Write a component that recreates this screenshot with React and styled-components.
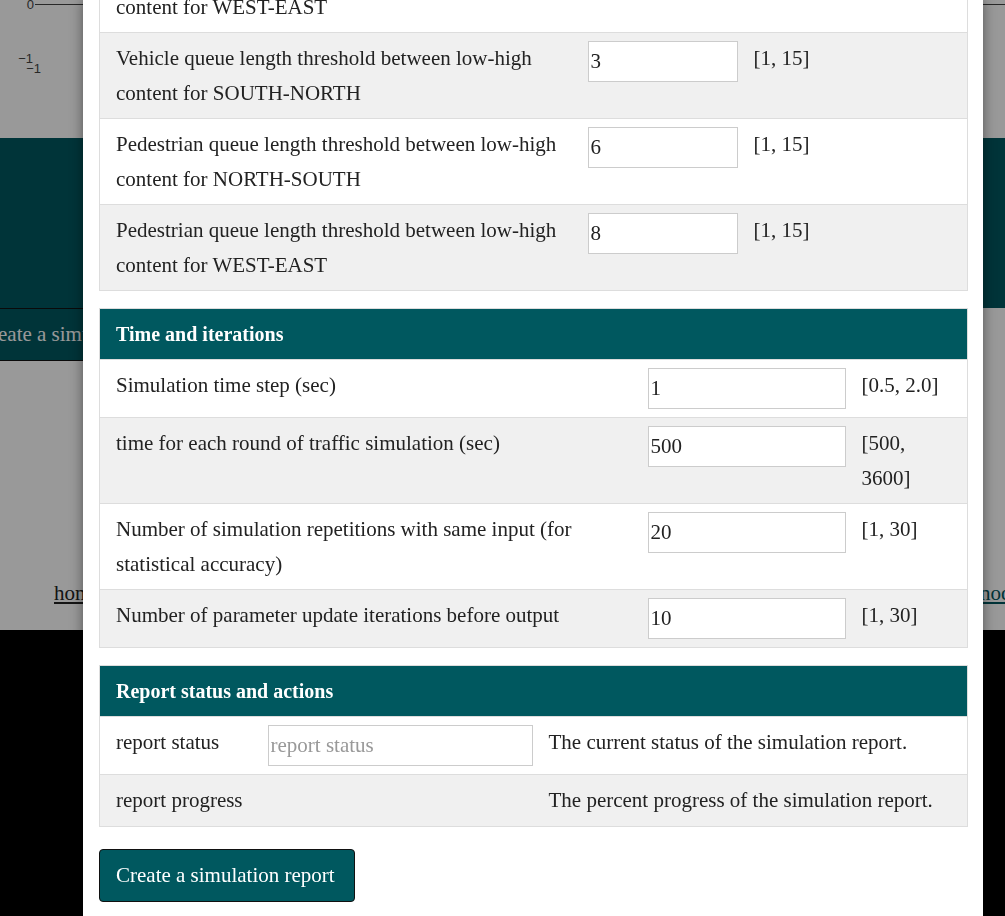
import styled, { createGlobalStyle } from "styled-components";

const GlobalStyle = createGlobalStyle`
  html, body {
    margin: 0;
    padding: 0;
    background: #000;
  }
  body {
    font-family: "Liberation Serif", "Times New Roman", serif;
    color: #222;
    overflow: hidden;
  }
`;

const TEAL = "#00585f";

/* ---------- page under the dialog ---------- */

const Page = styled.div`
  width: 100%;
  display: flex;
  flex-direction: column;
`;

const ChartArea = styled.section`
  height: 138px;
  background: #fff;
`;

const Hero = styled.section`
  height: 170px;
  background: ${TEAL};
`;

const ActionBar = styled.div`
  height: 53px;
  background: #fff;
  display: flex;
`;

const PageButton = styled.button`
  margin-left: -40px;
  width: 300px;
  height: 53px;
  padding: 8px 16px;
  text-align: left;
  background: ${TEAL};
  color: #fff;
  border: 1px solid #111;
  border-radius: 4px;
  font-family: inherit;
  font-size: 21px;
  white-space: nowrap;
`;

const Content = styled.section`
  height: 269px;
  background: #fff;
  display: flex;
  flex-direction: column;
  justify-content: flex-end;
`;

const NavRow = styled.nav`
  display: grid;
  grid-template-columns: 926px auto;
  padding-left: 54px;
  padding-bottom: 20px;
  font-size: 21px;
  line-height: 34px;
  white-space: nowrap;
`;

const NavLink = styled.a`
  color: ${(p) => (p.$accent ? TEAL : "#222")};
  text-decoration: underline;
`;

const Footer = styled.footer`
  height: 300px;
  background: #000;
`;

/* ---------- dialog ---------- */

const Backdrop = styled.div`
  position: fixed;
  inset: 0;
  background: rgba(0, 0, 0, 0.4);
`;

const Dialog = styled.div`
  position: fixed;
  top: 0;
  bottom: 0;
  left: 83px;
  width: 900px;
  background: #fff;
  box-shadow: 0 0 12px rgba(0, 0, 0, 0.45);
  overflow: hidden;
`;

/* the dialog is scrolled down: this offset is its scroll position */
const DialogBody = styled.div`
  margin-top: -54px;
  padding: 0 16px 16px;
  display: flex;
  flex-direction: column;
  gap: 17px;
`;

const Table = styled.table`
  width: 100%;
  border-collapse: collapse;
  table-layout: fixed;
  border: 1px solid #ddd;
  font-size: 21px;
  line-height: 34.5px;
`;

const HeadCell = styled.th`
  background: ${TEAL};
  color: #fff;
  text-align: left;
  font-weight: bold;
  font-size: 20px;
  line-height: 34px;
  padding: 8px 16px;
  height: 34px;
`;

const Row = styled.tr`
  background: ${(p) => (p.$shade ? "#f0f0f0" : "#fff")};
  border-top: 1px solid #ddd;
`;

const Cell = styled.td`
  padding: 8px ${(p) => (p.$tight ? 16 : 0)}px 8px 16px;
  vertical-align: top;
`;

const Field = styled.input`
  box-sizing: border-box;
  width: ${(p) => p.$w}px;
  height: 41px;
  padding: 0 2px;
  border: 1px solid #ccc;
  background: #fff;
  font-family: inherit;
  font-size: 21px;
  color: #222;
  outline: none;
  display: block;

  &::placeholder {
    color: #999;
  }
`;

const ActionButton = styled.button`
  align-self: flex-start;
  margin-top: 5px;
  padding: 8px 19px 8px 16px;
  background: ${TEAL};
  color: #fff;
  border: 1px solid #111;
  border-radius: 4px;
  font-family: inherit;
  font-size: 21px;
  line-height: 35px;
  cursor: pointer;
`;

const queueRows = [
  { label: "Vehicle queue length threshold between low-high content for WEST-EAST", value: "4" },
  { label: "Vehicle queue length threshold between low-high content for SOUTH-NORTH", value: "3" },
  { label: "Pedestrian queue length threshold between low-high content for NORTH-SOUTH", value: "6" },
  { label: "Pedestrian queue length threshold between low-high content for WEST-EAST", value: "8" },
];

const timeRows = [
  { label: "Simulation time step (sec)", value: "1", range: "[0.5, 2.0]" },
  { label: "time for each round of traffic simulation (sec)", value: "500", range: "[500, 3600]" },
  { label: "Number of simulation repetitions with same input (for statistical accuracy)", value: "20", range: "[1, 30]" },
  { label: "Number of parameter update iterations before output", value: "10", range: "[1, 30]" },
];

const Cols = ({ widths }) => (
  <colgroup>
    {widths.map((w, i) => (
      <col key={i} style={{ width: w }} />
    ))}
  </colgroup>
);

const Chart = () => (
  <svg width="100%" height="138" style={{ display: "block" }}>
    <line x1="35" y1="4.5" x2="1005" y2="4.5" stroke="#444" strokeWidth="1" />
    <g fontSize="13" fill="#444" textAnchor="end" fontFamily="Liberation Sans, sans-serif">
      <text x="34" y="9">0</text>
      <text x="33" y="63">−1</text>
      <text x="41" y="73">−1</text>
    </g>
  </svg>
);

const App = () => {
  return (
    <>
      <GlobalStyle />
      <Page>
        <ChartArea>
          <Chart />
        </ChartArea>
        <Hero />
        <ActionBar>
          <PageButton>Create a simulation report</PageButton>
        </ActionBar>
        <Content>
          <NavRow>
            <span>
              <NavLink href="#">home</NavLink>
            </span>
            <NavLink href="#" $accent>
              nodes
            </NavLink>
          </NavRow>
        </Content>
        <Footer />
      </Page>

      <Backdrop />
      <Dialog>
        <DialogBody>
          <Table>
            <Cols widths={[472, 166, 230]} />
            <tbody>
              {queueRows.map((r, i) => (
                <Row key={r.label} $shade={i % 2 === 1}>
                  <Cell>{r.label}</Cell>
                  <Cell>
                    <Field $w={150} defaultValue={r.value} />
                  </Cell>
                  <Cell>[1, 15]</Cell>
                </Row>
              ))}
            </tbody>
          </Table>

          <Table>
            <Cols widths={[532, 214, 122]} />
            <thead>
              <tr>
                <HeadCell colSpan={3}>Time and iterations</HeadCell>
              </tr>
            </thead>
            <tbody>
              {timeRows.map((r, i) => (
                <Row key={r.label} $shade={i % 2 === 1}>
                  <Cell>{r.label}</Cell>
                  <Cell>
                    <Field $w={198} defaultValue={r.value} />
                  </Cell>
                  <Cell $tight>{r.range}</Cell>
                </Row>
              ))}
            </tbody>
          </Table>

          <Table>
            <Cols widths={[152, 281, 435]} />
            <thead>
              <tr>
                <HeadCell colSpan={3}>Report status and actions</HeadCell>
              </tr>
            </thead>
            <tbody>
              <Row>
                <Cell>report status</Cell>
                <Cell>
                  <Field $w={265} placeholder="report status" autoFocus />
                </Cell>
                <Cell>The current status of the simulation report.</Cell>
              </Row>
              <Row $shade>
                <Cell>report progress</Cell>
                <Cell />
                <Cell>The percent progress of the simulation report.</Cell>
              </Row>
            </tbody>
          </Table>

          <ActionButton>Create a simulation report</ActionButton>
        </DialogBody>
      </Dialog>
    </>
  );
};

export default App;
